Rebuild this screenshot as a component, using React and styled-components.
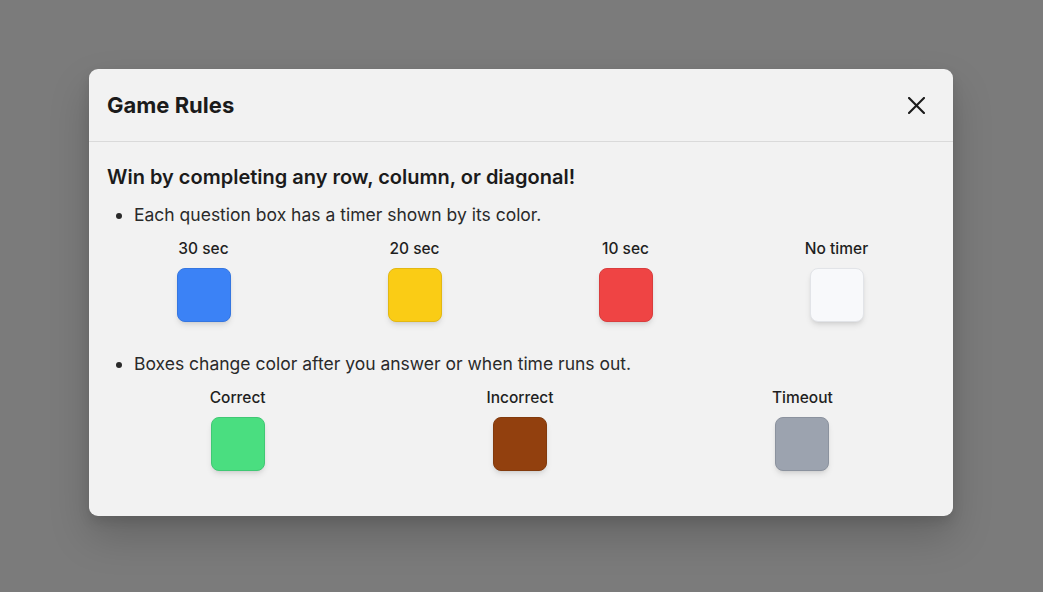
import styled, { createGlobalStyle } from "styled-components";

const GlobalStyle = createGlobalStyle`
  html, body {
    margin: 0;
    padding: 0;
  }
  body {
    font-family: Inter, "Noto Sans", sans-serif;
    color: #1f1f1f;
  }
`;

// Dimmed backdrop behind the dialog
const Overlay = styled.div`
  width: 1043px;
  height: 592px;
  background-color: #7b7b7b;
  display: flex;
  align-items: flex-start;
  justify-content: flex-start;
  padding: 69px 0 0 89px;
  box-sizing: border-box;
`;

const Modal = styled.div`
  width: 864px;
  background-color: #f2f2f2;
  border-radius: 9px;
  box-shadow: 0 20px 40px rgba(0, 0, 0, 0.18), 0 6px 12px rgba(0, 0, 0, 0.1);
  overflow: hidden;
`;

const Header = styled.div`
  display: flex;
  align-items: center;
  justify-content: space-between;
  height: 72px;
  padding: 0 25px 0 18px;
  border-bottom: 1px solid #dadada;
`;

const Title = styled.h2`
  margin: 0;
  font-size: 22px;
  font-weight: 700;
  color: #1b1b1b;
`;

const CloseButton = styled.button`
  border: none;
  background: none;
  padding: 0;
  width: 24px;
  height: 24px;
  display: flex;
  align-items: center;
  justify-content: center;
  cursor: pointer;
  color: #1b1b1b;
`;

const Body = styled.div`
  padding: 21px 18px 45px;
`;

const Heading = styled.h3`
  margin: 0;
  font-size: 20px;
  line-height: 28px;
  font-weight: 600;
  color: #1b1b1b;
`;

const RuleList = styled.ul`
  margin: 12px 0 0;
  padding-left: 27px;
`;

const Rule = styled.li`
  font-size: 17.5px;
  line-height: 24px;
  color: #2a2a2a;
  & + & {
    margin-top: 30px;
  }
`;

// Legend grid holding one swatch per column
const Legend = styled.div`
  display: grid;
  grid-template-columns: repeat(${(p) => p.$cols}, 1fr);
  column-gap: ${(p) => p.$gap}px;
  width: 826px;
  margin: 12px 0 0 -27px;
`;

const LegendItem = styled.div`
  display: flex;
  flex-direction: column;
  align-items: center;
  gap: 9px;
`;

const Label = styled.span`
  font-size: 15.5px;
  line-height: 20px;
  font-weight: 500;
  color: #1f1f1f;
`;

const Swatch = styled.div`
  width: 54px;
  height: 54px;
  box-sizing: border-box;
  border-radius: 8px;
  background-color: ${(p) => p.$color};
  border: 1px solid ${(p) => p.$border};
  box-shadow: 0 4px 6px -1px rgba(0, 0, 0, 0.1), 0 2px 4px -2px rgba(0, 0, 0, 0.1);
`;

const timers = [
  { label: "30 sec", color: "#3b82f6", border: "#3576e0" },
  { label: "20 sec", color: "#facc15", border: "#e3b812" },
  { label: "10 sec", color: "#ef4444", border: "#d93d3d" },
  { label: "No timer", color: "#f8f9fb", border: "#e2e4e8" },
];

const results = [
  { label: "Correct", color: "#4ade80", border: "#40c874" },
  { label: "Incorrect", color: "#92400e", border: "#823a0d" },
  { label: "Timeout", color: "#9ca3af", border: "#8b929e" },
];

function CloseIcon() {
  return (
    <svg width="17" height="17" viewBox="0 0 16 16" fill="none">
      <path d="M1 1L15 15M15 1L1 15" stroke="currentColor" strokeWidth="2" strokeLinecap="square" />
    </svg>
  );
}

function App() {
  return (
    <>
      <GlobalStyle />
      <Overlay>
        <Modal>
          <Header>
            <Title>Game Rules</Title>
            <CloseButton aria-label="Close">
              <CloseIcon />
            </CloseButton>
          </Header>
          <Body>
            <Heading>Win by completing any row, column, or diagonal!</Heading>
            <RuleList>
              <Rule>
                Each question box has a timer shown by its color.
                <Legend $cols={4} $gap={18}>
                  {timers.map((t) => (
                    <LegendItem key={t.label}>
                      <Label>{t.label}</Label>
                      <Swatch $color={t.color} $border={t.border} />
                    </LegendItem>
                  ))}
                </Legend>
              </Rule>
              <Rule>
                Boxes change color after you answer or when time runs out.
                <Legend $cols={3} $gap={21}>
                  {results.map((r) => (
                    <LegendItem key={r.label}>
                      <Label>{r.label}</Label>
                      <Swatch $color={r.color} $border={r.border} />
                    </LegendItem>
                  ))}
                </Legend>
              </Rule>
            </RuleList>
          </Body>
        </Modal>
      </Overlay>
    </>
  );
}

export default App;
